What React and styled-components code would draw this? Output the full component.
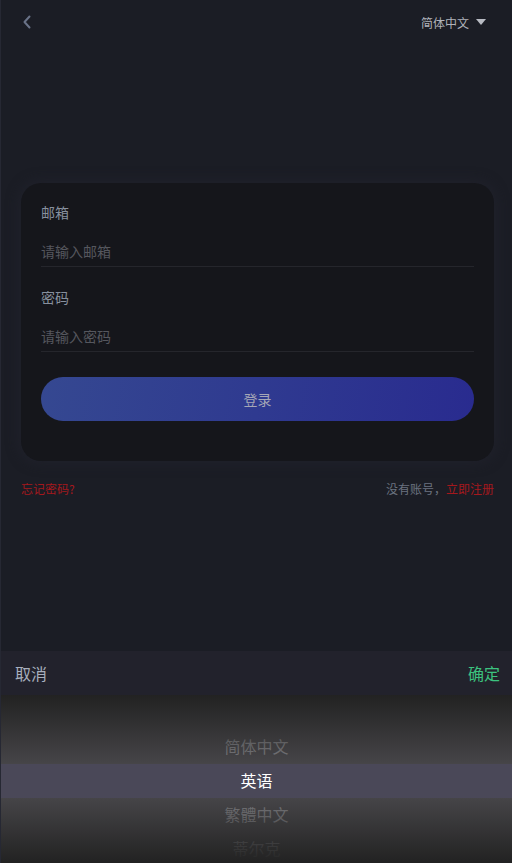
import React from "react";
import styled, { createGlobalStyle } from "styled-components";

const GlobalStyle = createGlobalStyle`
  html, body {
    margin: 0;
    padding: 0;
    background: #1b1d25;
    font-family: "Noto Sans CJK SC", "Noto Sans", sans-serif;
  }
  * { box-sizing: border-box; }
`;

const languages = ["简体中文", "英语", "繁體中文", "蒂尔克"];
const selected = 1;

export default function App() {
  return (
    <>
      <GlobalStyle />
      <Page>
        <Header>
          <BackButton aria-label="back">
            <svg width="12" height="16" viewBox="0 0 12 16">
              <path
                d="M8.5 2.5 L3.5 8 L8.5 13.5"
                fill="none"
                stroke="#6a7388"
                strokeWidth="2"
                strokeLinecap="round"
                strokeLinejoin="round"
              />
            </svg>
          </BackButton>
          <LangSwitch>
            简体中文
            <Caret />
          </LangSwitch>
        </Header>

        <Card>
          <Field>
            <Label>邮箱</Label>
            <Input placeholder="请输入邮箱" />
          </Field>
          <Field>
            <Label>密码</Label>
            <Input type="password" placeholder="请输入密码" />
          </Field>
          <LoginButton>登录</LoginButton>
        </Card>

        <Links>
          <RedLink>忘记密码?</RedLink>
          <span>
            <Muted>没有账号，</Muted>
            <RedLink>立即注册</RedLink>
          </span>
        </Links>

        <Picker>
          <Toolbar>
            <ToolButton>取消</ToolButton>
            <ToolButton $confirm>确定</ToolButton>
          </Toolbar>
          <Column>
            <Frame />
            <Items>
              {languages.map((lang, i) => (
                <Item key={lang} $active={i === selected}>
                  {lang}
                </Item>
              ))}
            </Items>
            <Mask />
          </Column>
        </Picker>
      </Page>
    </>
  );
}

const Page = styled.div`
  min-height: 863px;
  background: #1b1d25;
  border-left: 1px solid #262833;
  padding: 0 17px 0 20px;
  display: flex;
  flex-direction: column;
`;

const Header = styled.div`
  height: 44px;
  display: flex;
  align-items: center;
  justify-content: space-between;
`;

const BackButton = styled.div`
  display: flex;
  align-items: center;
  width: 20px;
  height: 20px;
`;

const LangSwitch = styled.div`
  display: flex;
  align-items: center;
  font-size: 12px;
  color: #b0b3bb;
  margin-right: 9px;
`;

const Caret = styled.span`
  width: 0;
  height: 0;
  margin-left: 7px;
  border-left: 5px solid transparent;
  border-right: 5px solid transparent;
  border-top: 6px solid #b8bbc3;
`;

const Card = styled.div`
  margin-top: 139px;
  width: 473px;
  background: #15161b;
  border-radius: 20px;
  padding: 19px 20px 40px;
  box-shadow: 0 0 12px 3px rgba(32, 34, 44, 0.8);
`;

const Field = styled.div`
  display: flex;
  flex-direction: column;
  & + & {
    margin-top: 20px;
  }
`;

const Label = styled.div`
  font-size: 14px;
  line-height: 20px;
  color: #87909e;
`;

const Input = styled.input`
  margin-top: 14px;
  height: 31px;
  padding: 0 0 1px;
  background: transparent;
  border: none;
  border-bottom: 1px solid #25262c;
  outline: none;
  font-family: inherit;
  font-size: 14px;
  color: #c0c4cc;
  &::placeholder {
    color: #55575e;
  }
`;

const LoginButton = styled.button`
  margin-top: 25px;
  width: 100%;
  height: 44px;
  border: none;
  border-radius: 22px;
  background: linear-gradient(100deg, #354891 0%, #2f3a90 50%, #292b8f 100%);
  color: #a5a7b6;
  font-family: inherit;
  font-size: 14px;
`;

const Links = styled.div`
  width: 473px;
  margin-top: 19px;
  display: flex;
  justify-content: space-between;
  font-size: 12px;
  line-height: 17px;
`;

const RedLink = styled.span`
  color: #a5181d;
`;

const Muted = styled.span`
  color: #6b7380;
`;

const Picker = styled.div`
  position: fixed;
  left: 1px;
  right: 0;
  bottom: 0;
`;

const Toolbar = styled.div`
  height: 44px;
  background: #22222c;
  display: flex;
  align-items: center;
  justify-content: space-between;
  padding: 0 12px 0 14px;
`;

const ToolButton = styled.span`
  font-size: 16px;
  color: ${(p) => (p.$confirm ? "#3cc27f" : "#a7afbd")};
`;

const Column = styled.div`
  position: relative;
  height: 168px;
  overflow: hidden;
  background: #464548;
`;

const Frame = styled.div`
  position: absolute;
  left: 0;
  right: 0;
  top: 69px;
  height: 34px;
  background: #4a4858;
`;

const Items = styled.div`
  position: relative;
  padding-top: 34px;
`;

const Item = styled.div`
  height: 34px;
  display: flex;
  align-items: center;
  justify-content: center;
  font-size: 16px;
  color: ${(p) => (p.$active ? "#ffffff" : "#7a7a7e")};
`;

const Mask = styled.div`
  position: absolute;
  inset: 0;
  pointer-events: none;
  background:
    linear-gradient(180deg, rgba(34, 34, 34, 1) 0%, rgba(34, 34, 34, 0) 41%) top / 100% 100% no-repeat,
    linear-gradient(0deg, rgba(34, 34, 34, 1) 0%, rgba(34, 34, 34, 0) 39%) bottom / 100% 100% no-repeat;
`;
